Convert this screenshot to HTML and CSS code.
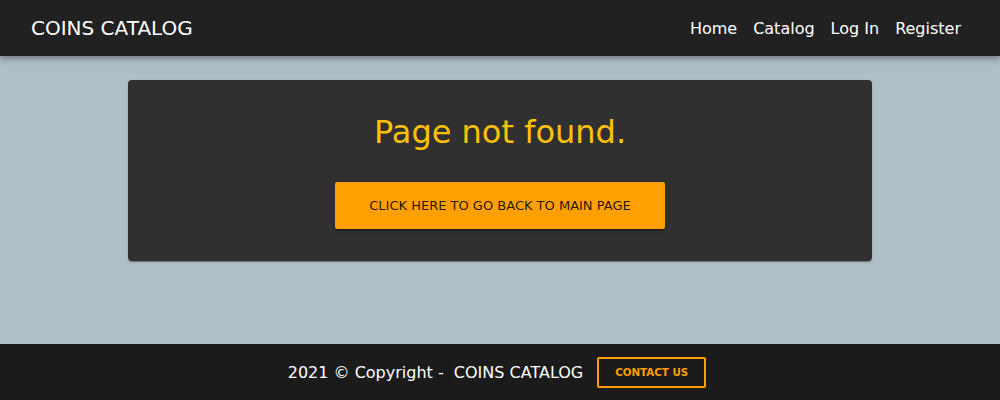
FILE: index.html
```html
<!DOCTYPE html>
<html>
<head>
<meta charset="utf-8">
<link rel="stylesheet" href="styles.css">
</head>
<body>
<div class="app">
  <header class="bar">
    <div class="brand">COINS CATALOG</div>
    <nav class="nav">
      <a href="#">Home</a>
      <a href="#">Catalog</a>
      <a href="#">Log In</a>
      <a href="#">Register</a>
    </nav>
  </header>
  <main class="main">
    <section class="card">
      <h1 class="title">Page not found.</h1>
      <a class="btn" href="#">Click here to go back to main page</a>
    </section>
  </main>
  <footer class="foot">
    <span class="copy">2021 © Copyright - &nbsp;COINS CATALOG</span>
    <a class="contact" href="#">Contact us</a>
  </footer>
</div>
</body>
</html>
```

FILE: styles.css
```css
* { box-sizing: border-box; }
html, body { margin: 0; padding: 0; }
body {
  font-family: "DejaVu Sans", sans-serif;
  background: #b0bec5;
  width: 1000px;
  height: 400px;
  overflow: hidden;
}
.app {
  display: flex;
  flex-direction: column;
  height: 400px;
}
.bar {
  height: 56px;
  background: #212121;
  display: flex;
  align-items: center;
  justify-content: space-between;
  padding: 0 39px 0 31px;
  box-shadow: 0 2px 4px -1px rgba(0,0,0,.2), 0 4px 5px 0 rgba(0,0,0,.14), 0 1px 10px 0 rgba(0,0,0,.12);
  position: relative;
  z-index: 2;
}
.brand {
  color: #fff;
  font-size: 20px;
}
.nav {
  display: flex;
  gap: 16px;
}
.nav a {
  color: #fff;
  text-decoration: none;
  font-size: 16px;
}
.main {
  flex: 1;
  padding: 24px 128px;
}
.card {
  background: #303030;
  border-radius: 4px;
  display: flex;
  flex-direction: column;
  align-items: center;
  padding: 28px 0 32px;
  box-shadow: 0 2px 1px -1px rgba(0,0,0,.2), 0 1px 1px 0 rgba(0,0,0,.14), 0 1px 3px 0 rgba(0,0,0,.12);
}
.title {
  margin: 0 0 26px;
  color: #ffc107;
  font-weight: 400;
  font-size: 32px;
  line-height: 48px;
}
.btn {
  display: flex;
  align-items: center;
  justify-content: center;
  width: 330px;
  height: 47px;
  background: #ffa000;
  color: rgba(0,0,0,.87);
  text-decoration: none;
  text-transform: uppercase;
  font-size: 13px;
  border-radius: 2px;
  box-shadow: 0 3px 1px -2px rgba(0,0,0,.2), 0 2px 2px 0 rgba(0,0,0,.14), 0 1px 5px 0 rgba(0,0,0,.12);
}
.foot {
  height: 56px;
  background: #1b1b1b;
  display: flex;
  align-items: center;
  justify-content: center;
  gap: 14px;
  padding-right: 6px;
}
.copy {
  color: #fff;
  font-size: 16px;
}
.contact {
  display: flex;
  align-items: center;
  justify-content: center;
  width: 109px;
  height: 31px;
  border: 2px solid #ffa000;
  border-radius: 2px;
  color: #ffa000;
  text-decoration: none;
  text-transform: uppercase;
  font-weight: 700;
  font-size: 10.3px;
}
```
